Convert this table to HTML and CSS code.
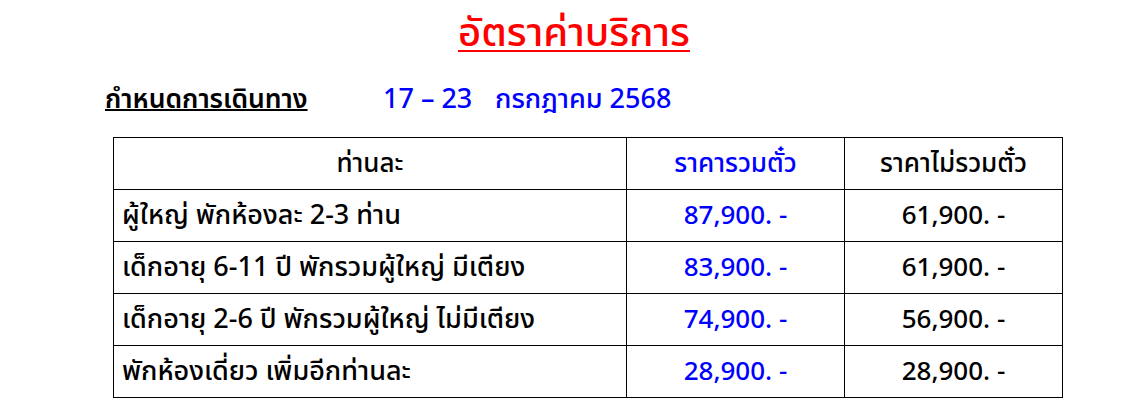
FILE: index.html
```html
<!DOCTYPE html>
<html lang="th">
<head>
<meta charset="utf-8">
<title>อัตราค่าบริการ</title>
<link rel="stylesheet" href="styles.css">
</head>
<body>
<div class="page">
  <h1 class="title"><span>อัตราค่าบริการ</span></h1>
  <div class="trip">
    <span class="trip-label">กำหนดการเดินทาง</span>
    <span class="trip-date">17 – 23</span>
    <span class="trip-month">กรกฎาคม 2568</span>
  </div>
  <table class="rates">
    <colgroup>
      <col class="c1"><col class="c2"><col class="c3">
    </colgroup>
    <thead>
      <tr>
        <th>ท่านละ</th>
        <th class="blue">ราคารวมตั๋ว</th>
        <th>ราคาไม่รวมตั๋ว</th>
      </tr>
    </thead>
    <tbody>
      <tr><td class="desc">ผู้ใหญ่ พักห้องละ 2-3 ท่าน</td><td class="blue">87,900. -</td><td>61,900. -</td></tr>
      <tr><td class="desc">เด็กอายุ 6-11 ปี พักรวมผู้ใหญ่ มีเตียง</td><td class="blue">83,900. -</td><td>61,900. -</td></tr>
      <tr><td class="desc">เด็กอายุ 2-6 ปี พักรวมผู้ใหญ่ ไม่มีเตียง</td><td class="blue">74,900. -</td><td>56,900. -</td></tr>
      <tr><td class="desc">พักห้องเดี่ยว เพิ่มอีกท่านละ</td><td class="blue">28,900. -</td><td>28,900. -</td></tr>
    </tbody>
  </table>
</div>
</body>
</html>
```

FILE: styles.css
```css
html, body {
  margin: 0;
  padding: 0;
  background: #fff;
}
body {
  font-family: Tahoma, "Noto Sans Thai", "Noto Sans Thai UI", Loma, Garuda, "Noto Sans", sans-serif;
  color: #000;
}
.page {
  padding: 0 0 0 113px;
}
.title {
  margin: 0;
  padding: 10px 0 0 345px;
  font-size: 40px;
  font-weight: 500;
  line-height: 48px;
  color: #ff0000;
}
.title span {
  text-decoration: underline;
  text-decoration-thickness: 2px;
  text-underline-offset: 4px;
}
.trip {
  display: flex;
  margin: 24px 0 0 -8px;
  font-size: 27px;
  line-height: 36px;
  font-weight: 500;
}
.trip-label {
  text-decoration: underline;
  text-decoration-thickness: 2px;
  width: 278px;
  font-size: 26.5px;
  font-weight: 600;
}
.trip-date {
  color: #0000ff;
  width: 112px;
}
.trip-month {
  color: #0000ff;
}
.rates {
  margin-top: 19px;
  border-collapse: collapse;
  width: 950px;
  table-layout: fixed;
  font-size: 26px;
}
.c1 { width: 513px; }
.c2 { width: 218px; }
.c3 { width: 218px; }
.rates th, .rates td {
  border: 1px solid #000;
  height: 51px;
  padding: 0;
  text-align: center;
  font-weight: 500;
}
.rates td.desc {
  text-align: left;
  padding-left: 8px;
  font-size: 27px;
}
.blue {
  color: #0000ff;
}
```
